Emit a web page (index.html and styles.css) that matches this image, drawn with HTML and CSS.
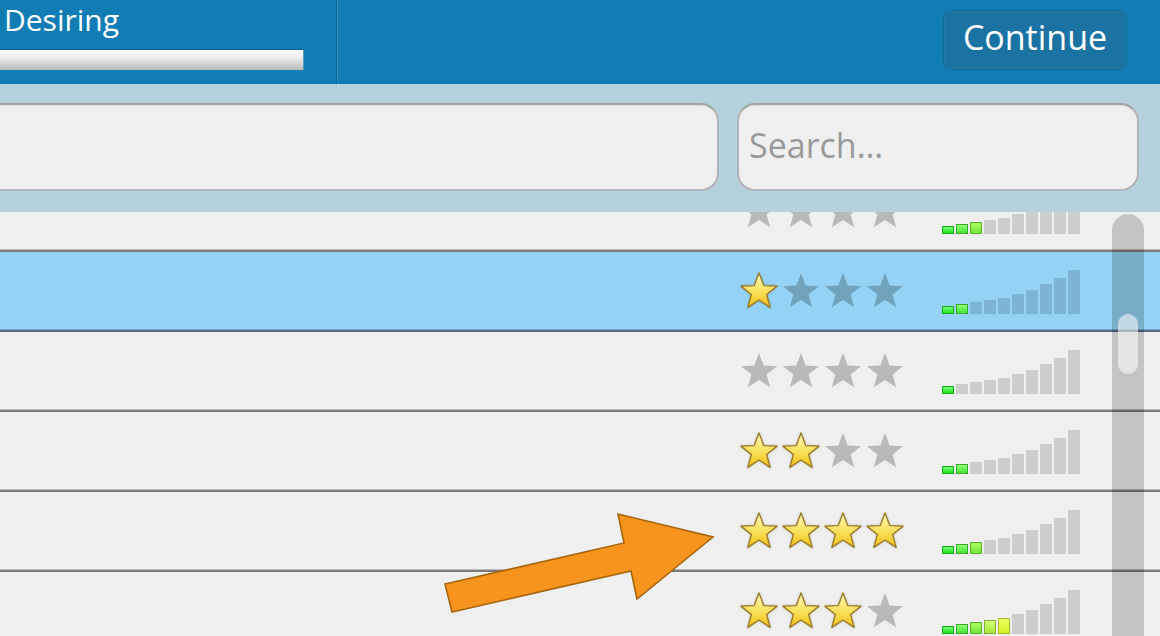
FILE: index.html
```html
<!DOCTYPE html>
<html>
<head>
<meta charset="utf-8">
<link rel="stylesheet" href="styles.css">
</head>
<body>
<svg class="defs" width="0" height="0" aria-hidden="true">
  <defs>
    <linearGradient id="gold" x1="0" y1="0" x2="0" y2="1">
      <stop offset="0" stop-color="#fffbc4"/>
      <stop offset="0.45" stop-color="#fbe46a"/>
      <stop offset="1" stop-color="#f2bf14"/>
    </linearGradient>
    <symbol id="star" viewBox="0 0 40 40">
      <polygon points="20,2 24.7,14.53 38.07,15.13 27.61,23.47 31.17,36.37 20,29 8.83,36.37 12.39,23.47 1.93,15.13 15.3,14.53"/>
    </symbol>
  </defs>
</svg>
<div class="app">
  <header class="topbar">
    <div class="title-block">
      <div class="title">Desiring</div>
      <div class="progress"></div>
    </div>
    <div class="topbar-fill"></div>
    <button class="continue">Continue</button>
  </header>

  <div class="toolbar">
    <div class="field field-main"></div>
    <div class="field field-search"><span class="placeholder">Search…</span></div>
  </div>

  <div class="list">
    <div class="list-inner">
      <div class="row">
        <div class="stars">
          <svg class="star"><use href="#star"/></svg><svg class="star"><use href="#star"/></svg><svg class="star"><use href="#star"/></svg><svg class="star"><use href="#star"/></svg>
        </div>
        <div class="bars">
          <i class="bar on"></i><i class="bar on"></i><i class="bar on"></i><i class="bar"></i><i class="bar"></i><i class="bar"></i><i class="bar"></i><i class="bar"></i><i class="bar"></i><i class="bar"></i>
        </div>
      </div>
      <div class="row selected">
        <div class="stars">
          <svg class="star on"><use href="#star"/></svg><svg class="star"><use href="#star"/></svg><svg class="star"><use href="#star"/></svg><svg class="star"><use href="#star"/></svg>
        </div>
        <div class="bars">
          <i class="bar on"></i><i class="bar on"></i><i class="bar"></i><i class="bar"></i><i class="bar"></i><i class="bar"></i><i class="bar"></i><i class="bar"></i><i class="bar"></i><i class="bar"></i>
        </div>
      </div>
      <div class="row">
        <div class="stars">
          <svg class="star"><use href="#star"/></svg><svg class="star"><use href="#star"/></svg><svg class="star"><use href="#star"/></svg><svg class="star"><use href="#star"/></svg>
        </div>
        <div class="bars">
          <i class="bar on"></i><i class="bar"></i><i class="bar"></i><i class="bar"></i><i class="bar"></i><i class="bar"></i><i class="bar"></i><i class="bar"></i><i class="bar"></i><i class="bar"></i>
        </div>
      </div>
      <div class="row">
        <div class="stars">
          <svg class="star on"><use href="#star"/></svg><svg class="star on"><use href="#star"/></svg><svg class="star"><use href="#star"/></svg><svg class="star"><use href="#star"/></svg>
        </div>
        <div class="bars">
          <i class="bar on"></i><i class="bar on"></i><i class="bar"></i><i class="bar"></i><i class="bar"></i><i class="bar"></i><i class="bar"></i><i class="bar"></i><i class="bar"></i><i class="bar"></i>
        </div>
      </div>
      <div class="row">
        <div class="stars">
          <svg class="star on"><use href="#star"/></svg><svg class="star on"><use href="#star"/></svg><svg class="star on"><use href="#star"/></svg><svg class="star on"><use href="#star"/></svg>
        </div>
        <div class="bars">
          <i class="bar on"></i><i class="bar on"></i><i class="bar on"></i><i class="bar"></i><i class="bar"></i><i class="bar"></i><i class="bar"></i><i class="bar"></i><i class="bar"></i><i class="bar"></i>
        </div>
      </div>
      <div class="row">
        <div class="stars">
          <svg class="star on"><use href="#star"/></svg><svg class="star on"><use href="#star"/></svg><svg class="star on"><use href="#star"/></svg><svg class="star"><use href="#star"/></svg>
        </div>
        <div class="bars">
          <i class="bar on"></i><i class="bar on"></i><i class="bar on"></i><i class="bar on"></i><i class="bar on"></i><i class="bar"></i><i class="bar"></i><i class="bar"></i><i class="bar"></i><i class="bar"></i>
        </div>
      </div>
    </div>
    <div class="scrollbar"><div class="thumb"></div></div>
  </div>

  <svg class="arrow" viewBox="0 0 1160 636" aria-hidden="true">
    <polygon points="445,584 624,543 618,514 713,537 637,599 631,571 452,612"/>
  </svg>
</div>
</body>
</html>
```

FILE: styles.css
```css
* { box-sizing: border-box; }

html, body {
  margin: 0;
  padding: 0;
  width: 1160px;
  height: 636px;
  overflow: hidden;
  background: #efefef;
  font-family: "Open Sans", "Liberation Sans", sans-serif;
}

.defs { position: absolute; width: 0; height: 0; }

.app {
  position: relative;
  width: 1160px;
  height: 636px;
  overflow: hidden;
}

/* ---------- top bar ---------- */
.topbar {
  display: flex;
  height: 84px;
  background: #127db5;
}

.title-block {
  width: 337px;
  border-right: 1px solid #0c6898;
  box-shadow: 1px 0 0 #2a8bbf;
}

.title {
  padding-left: 4px;
  color: #fff;
  font-size: 30px;
  line-height: 40px;
}

.progress {
  margin-top: 9px;
  width: 304px;
  height: 21px;
  border-top: 1px solid #0b5f8e;
  border-right: 1px solid #5a9cc0;
  background: linear-gradient(#fefefe, #ececec 40%, #c9c9c9 80%, #b9b9b9);
}

.topbar-fill { flex: 1; }

.continue {
  margin: 10px 33px 0 0;
  width: 184px;
  height: 60px;
  padding: 0 0 6px;
  border: 1px solid #126a98;
  border-radius: 7px;
  background: #1a73a2;
  box-shadow: inset 0 0 2px rgba(255,255,255,0.15);
  color: #fff;
  font-family: "Open Sans", "Liberation Sans", sans-serif;
  font-size: 34px;
  line-height: 52px;
}

/* ---------- toolbar ---------- */
.toolbar {
  display: flex;
  gap: 18px;
  height: 128px;
  padding: 19px 21px 21px 0;
  background: #b4d1dd;
}

.field {
  height: 88px;
  border: 2px solid #b4b4b4;
  border-top-color: #a4a4a4;
  border-radius: 18px;
  background: #efefef;
  box-shadow: inset 0 1px 1px rgba(0,0,0,0.08);
}

.field-main {
  flex: 1;
  margin-left: -24px;
}

.field-search {
  width: 402px;
  padding: 0 0 4px 10px;
  display: flex;
  align-items: center;
}

.placeholder {
  color: #999;
  font-size: 34px;
  line-height: 44px;
}

/* ---------- list ---------- */
.list {
  position: relative;
  height: 424px;
  overflow: hidden;
}

.list-inner { margin-top: -40px; }

.row {
  display: flex;
  justify-content: flex-end;
  align-items: center;
  height: 80px;
  padding-right: 80px;
  background: #efefef;
  border-bottom: 2px solid #7b7b7b;
  box-shadow: inset 0 -1px 0 #bdbdbd;
}

.row.selected {
  background: #94d3f5;
  border-bottom-color: #4e6b80;
  box-shadow: inset 0 -1px 0 #78a9c6;
}

.stars {
  display: flex;
  gap: 2px;
  margin-right: 37px;
}

.star {
  width: 40px;
  height: 40px;
  fill: #b9b9b9;
}

.selected .star { fill: #72a3bd; }

.star.on, .selected .star.on {
  fill: url(#gold);
  stroke: #9a7a26;
  stroke-width: 1.3;
  stroke-linejoin: round;
  filter: drop-shadow(0 0 1px rgba(90,70,10,0.35));
}

.bars {
  align-self: flex-end;
  display: flex;
  align-items: flex-end;
  gap: 2px;
  height: 44px;
  margin-bottom: 16px;
}

.bar {
  display: block;
  width: 12px;
  background: #cdcdcd;
  border: 1px solid transparent;
  border-width: 0;
}

.selected .bar { background: #7db4d3; }

.bar:nth-child(1) { height: 8px; }
.bar:nth-child(2) { height: 10px; }
.bar:nth-child(3) { height: 12px; }
.bar:nth-child(4) { height: 14px; }
.bar:nth-child(5) { height: 16px; }
.bar:nth-child(6) { height: 20px; }
.bar:nth-child(7) { height: 24px; }
.bar:nth-child(8) { height: 30px; }
.bar:nth-child(9) { height: 36px; }
.bar:nth-child(10) { height: 44px; }

.bar.on { border-width: 1px; }
.bar.on:nth-child(1), .selected .bar.on:nth-child(1) { background: linear-gradient(#77ff77, #1fe21f); border-color: #17a817; }
.bar.on:nth-child(2), .selected .bar.on:nth-child(2) { background: linear-gradient(#8dff77, #46e636); border-color: #38a82a; }
.bar.on:nth-child(3), .selected .bar.on:nth-child(3) { background: linear-gradient(#aaff66, #72e632); border-color: #5aae30; }
.bar.on:nth-child(4), .selected .bar.on:nth-child(4) { background: linear-gradient(#d0ff70, #a8ea3c); border-color: #86ae38; }
.bar.on:nth-child(5), .selected .bar.on:nth-child(5) { background: linear-gradient(#f0ff66, #d2f524); border-color: #a9b42a; }

/* ---------- overlays ---------- */
.scrollbar {
  position: absolute;
  top: 2px;
  left: 1112px;
  width: 32px;
  height: 440px;
  border-radius: 16px 16px 0 0;
  background: rgba(0, 0, 0, 0.18);
}

.thumb {
  margin: 100px auto 0;
  width: 20px;
  height: 60px;
  border-radius: 10px;
  background: rgba(255, 255, 255, 0.55);
}

.arrow {
  position: absolute;
  left: 0;
  top: 0;
  width: 1160px;
  height: 636px;
  pointer-events: none;
}

.arrow polygon {
  fill: #f7941e;
  stroke: #a6660e;
  stroke-width: 1.6;
  stroke-linejoin: miter;
}
```
